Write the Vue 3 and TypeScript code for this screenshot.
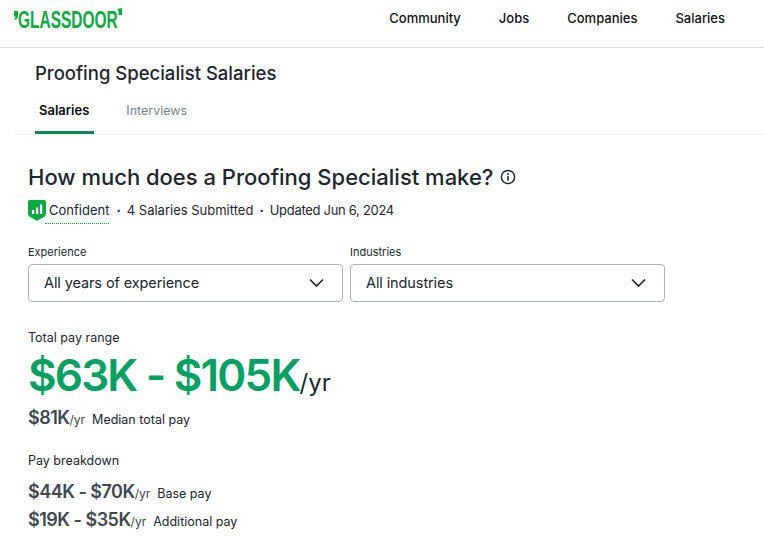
<template>
  <div class="page">
    <header class="topbar">
      <div class="logo">
        <svg class="quote" width="4" height="9" viewBox="0 0 4 9">
          <path d="M0 0 H4 V4.500 Q4 7.500 1 9 L0.500 7.800 Q1.500 7 1.500 5.500 H0 Z" fill="#0caa41" />
        </svg>
        <span class="wordmark">GLASSDOOR</span>
        <svg class="quote end" width="5" height="7" viewBox="0 0 5 7">
          <path d="M0 0 L1 1 Q2 0.500 5 0 V7 H1.500 V3.500 Q1.500 2.500 0.500 1.500 Z" fill="#0caa41" />
        </svg>
      </div>
      <nav class="nav">
        <a v-for="item in navItems" :key="item" class="nav-item">{{ item }}</a>
      </nav>
    </header>

    <section class="title-block">
      <h1 class="page-title">Proofing Specialist Salaries</h1>
      <div class="tabs">
        <a class="tab active">Salaries</a>
        <a class="tab">Interviews</a>
      </div>
    </section>

    <main class="content">
      <div class="heading-row">
        <h2 class="heading">How much does a Proofing Specialist make?</h2>
        <svg class="info" width="16" height="16" viewBox="0 0 16 16" fill="none">
          <circle cx="8" cy="8" r="6.6" stroke="#20262e" stroke-width="1.5" />
          <rect x="7.2" y="7" width="1.6" height="4.6" fill="#20262e" />
          <circle cx="8" cy="5" r="1" fill="#20262e" />
        </svg>
      </div>

      <div class="meta">
        <svg class="shield" width="18" height="21" viewBox="0 0 18 21">
          <path d="M0 1.5 Q0 0 1.5 0 H16.5 Q18 0 18 1.5 V14 Q18 15.500 16.800 16.300 L9 21 L1.200 16.300 Q0 15.500 0 14 Z" fill="#0caa41" />
          <rect x="4" y="10" width="2.200" height="4" fill="#fff" />
          <rect x="8" y="7.500" width="2.200" height="6.500" fill="#fff" />
          <rect x="12" y="4.500" width="2.200" height="9.500" fill="#fff" />
        </svg>
        <span class="confident">Confident</span>
        <span class="dot">·</span>
        <span>4 Salaries Submitted</span>
        <span class="dot">·</span>
        <span class="updated">Updated Jun 6, 2024</span>
      </div>

      <div class="filters">
        <div v-for="filter in filters" :key="filter.label" class="filter">
          <label class="filter-label">{{ filter.label }}</label>
          <div class="select">
            <span class="select-value">{{ filter.value }}</span>
            <svg width="15" height="10" viewBox="0 0 15 10" fill="none">
              <path d="M1 1.500 L7.500 8 L14 1.500" stroke="#20262e" stroke-width="1.700" />
            </svg>
          </div>
        </div>
      </div>

      <div class="label range-label">Total pay range</div>
      <div class="range">$63K - $105K<span class="range-unit">/yr</span></div>
      <div class="pay-row median">
        <span class="amount">$81K</span><span class="unit">/yr</span>
        <span class="pay-name">Median total pay</span>
      </div>

      <div class="label breakdown-label">Pay breakdown</div>
      <div v-for="row in breakdown" :key="row.name" class="pay-row tight">
        <span class="amount">{{ row.amount }}</span><span class="unit">/yr</span>
        <span class="pay-name">{{ row.name }}</span>
      </div>
    </main>
  </div>
</template>

<script setup lang="ts">
const navItems: string[] = ['Community', 'Jobs', 'Companies', 'Salaries'];

const filters = [
  { label: 'Experience', value: 'All years of experience' },
  { label: 'Industries', value: 'All industries' },
];

const breakdown = [
  { amount: '$44K - $70K', name: 'Base pay' },
  { amount: '$19K - $35K', name: 'Additional pay' },
];
</script>

<style scoped>
.page {
  width: 764px;
  height: 548px;
  overflow: hidden;
  background: #fff;
  color: #20262e;
  font-family: Inter, "Liberation Sans", sans-serif;
}

.topbar {
  display: flex;
  justify-content: space-between;
  height: 47px;
  padding: 0 39px 0 14px;
  border-bottom: 1px solid #dedede;
}

.logo {
  position: relative;
  width: 108px;
  height: 20px;
  margin-top: 8px;
}

.wordmark {
  display: block;
  margin-left: 4px;
  padding-top: 1px;
  font-family: "Liberation Sans", sans-serif;
  font-weight: 700;
  font-size: 24px;
  line-height: 22px;
  color: #0caa41;
  transform: scaleX(0.645);
  transform-origin: left top;
  white-space: nowrap;
}

.quote {
  position: absolute;
  left: 0;
  top: 3px;
}

.quote.end {
  left: 103px;
  top: 0;
}

.nav {
  display: flex;
  gap: 38px;
  padding-top: 10px;
}

.nav-item {
  font-size: 13px;
  font-weight: 500;
  line-height: 17px;
  color: #101214;
}

.title-block {
  margin-left: 14px;
  padding: 13px 0 0 21px;
  border-bottom: 1px solid #f0f0f0;
}

.page-title {
  margin: 0;
  font-size: 18.500px;
  font-weight: 500;
  line-height: 24px;
}

.tabs {
  display: flex;
  gap: 28px;
  margin-top: 13px;
}

.tab {
  padding: 4px 4px 12px;
  font-size: 12.500px;
  line-height: 17px;
  color: #7a828c;
}

.tab.active {
  padding-right: 5px;
  font-size: 13px;
  font-weight: 600;
  color: #0b0d0f;
  border-bottom: 3px solid #0a8754;
}

.content {
  padding: 27px 0 0 28px;
}

.heading-row {
  display: flex;
  align-items: center;
  gap: 7px;
}

.heading {
  margin: 0;
  font-size: 22px;
  font-weight: 500;
  line-height: 30px;
}

.meta {
  display: flex;
  align-items: center;
  gap: 6px;
  margin-top: 7px;
  height: 22px;
  font-size: 13px;
}

.shield {
  margin-right: -3px;
}

.confident {
  margin: 0 1px 0 -4px;
  padding: 5px 0 5px 4px;
  border-bottom: 1px dotted #0caa41;
}

.dot {
  font-weight: 700;
}

.updated {
  letter-spacing: -0.3px;
}

.filters {
  display: flex;
  gap: 7px;
  margin-top: 24px;
}

.filter {
  width: 315px;
}

.filter-label {
  display: block;
  font-size: 11px;
  line-height: 15px;
  margin-bottom: 4px;
}

.select {
  box-sizing: border-box;
  display: flex;
  align-items: center;
  justify-content: space-between;
  height: 38px;
  padding: 0 18px 0 15px;
  border: 1px solid #aeb4bc;
  border-radius: 4px;
  font-size: 14.500px;
  letter-spacing: -0.1px;
}

.select-value {
  padding-bottom: 2px;
}

.label {
  font-size: 12.500px;
  line-height: 16px;
}

.range-label {
  margin-top: 28px;
}

.range {
  margin-top: 5px;
  font-size: 44px;
  font-weight: 600;
  line-height: 48px;
  letter-spacing: -1.8px;
  color: #00a162;
}

.range-unit {
  font-size: 24px;
  font-weight: 400;
  letter-spacing: 0;
  color: #20262e;
}

.pay-row {
  display: flex;
  align-items: baseline;
  height: 28px;
  line-height: 28px;
}

.pay-row.tight {
  height: 27.500px;
}

.median {
  margin-top: -3px;
}

.amount {
  font-size: 18px;
  font-weight: 600;
  letter-spacing: -0.5px;
  color: #404850;
}

.unit {
  font-size: 12px;
  color: #404850;
}

.pay-name {
  margin-left: 7px;
  font-size: 12.500px;
}

.breakdown-label {
  margin-top: 21px;
  margin-bottom: 9px;
}
</style>
